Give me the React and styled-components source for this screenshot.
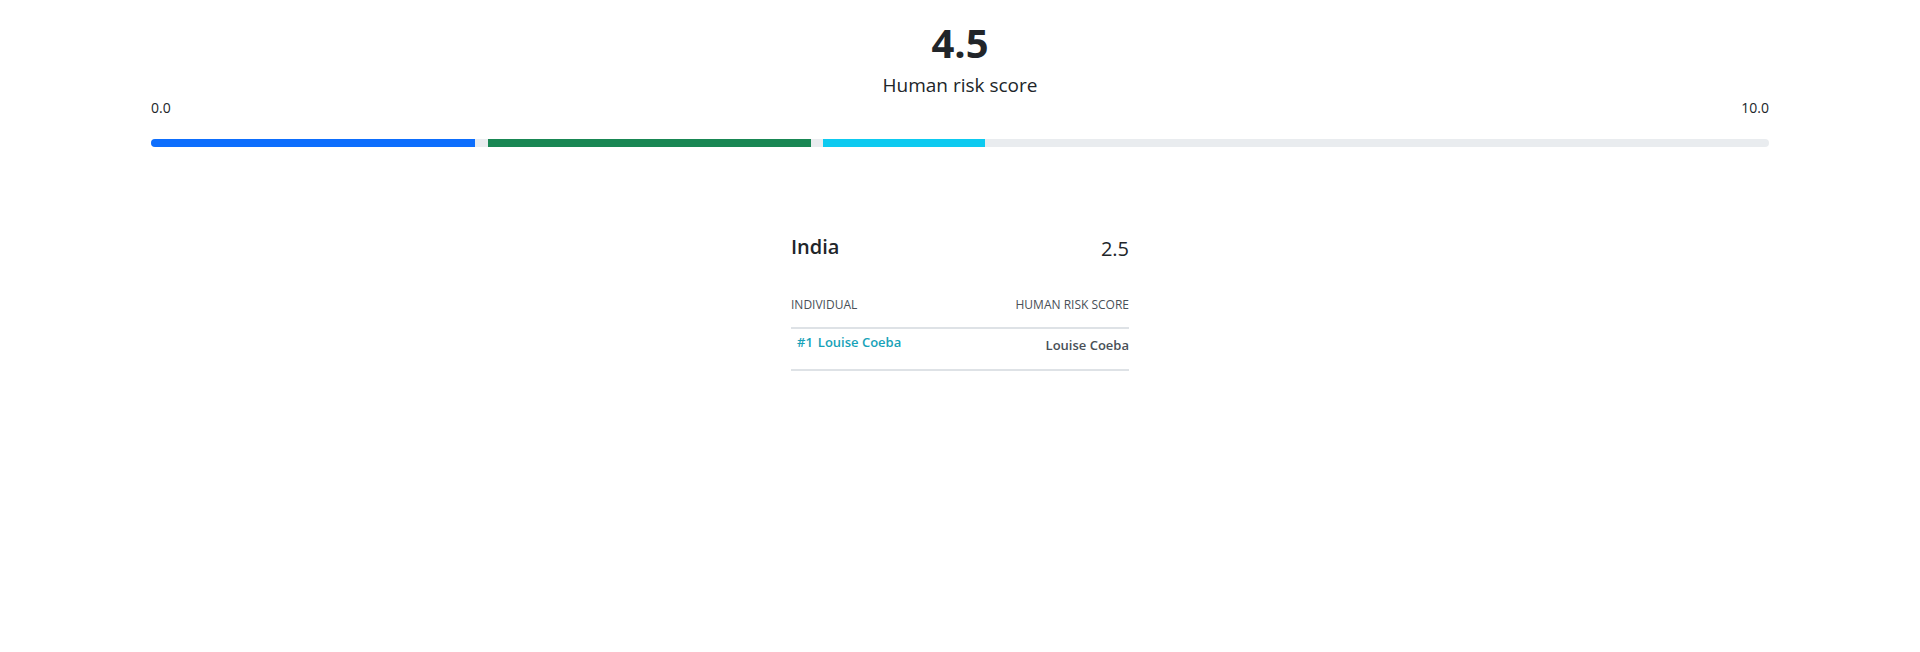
import styled, { createGlobalStyle } from 'styled-components';

const GlobalStyle = createGlobalStyle`
  body {
    margin: 0;
    background: #fff;
    color: #212529;
    font-family: "Open Sans", "Noto Sans", sans-serif;
  }
`;

const segments = [
  { id: 'low', color: '#0d6efd', width: 20, gap: 13 },
  { id: 'mid', color: '#198754', width: 20, gap: 12 },
  { id: 'high', color: '#0dcaf0', width: 10, gap: 0 },
];

const rows = [
  { rank: 1, name: 'Louise Coeba', score: 'Louise Coeba' },
];

function App() {
  return (
    <>
      <GlobalStyle />
      <Page>
        <Summary>
          <Score>4.5</Score>
          <Caption>Human risk score</Caption>
        </Summary>

        <ScaleLabels>
          <span>0.0</span>
          <span>10.0</span>
        </ScaleLabels>
        <Progress>
          {segments.map((s) => (
            <Segment key={s.id} $color={s.color} $gap={s.gap} style={{ width: `${s.width}%` }} />
          ))}
        </Progress>

        <Card>
          <CardHead>
            <Country>India</Country>
            <CountryScore>2.5</CountryScore>
          </CardHead>
          <Table>
            <thead>
              <tr>
                <Th>Individual</Th>
                <Th $right>Human risk score</Th>
              </tr>
            </thead>
            <tbody>
              {rows.map((r) => (
                <tr key={r.rank}>
                  <Td>
                    <PersonLink href="#">
                      <Rank>#{r.rank}</Rank>
                      {r.name}
                    </PersonLink>
                  </Td>
                  <Td $right>{r.score}</Td>
                </tr>
              ))}
            </tbody>
          </Table>
        </Card>
      </Page>
    </>
  );
}

export default App;

const Page = styled.div`
  padding: 19px 151px 0 151px;
`;

const Summary = styled.div`
  text-align: center;
`;

const Score = styled.h1`
  margin: 0;
  font-size: 40px;
  font-weight: 700;
  line-height: 1.2;
  color: #212529;
`;

const Caption = styled.p`
  margin: 3px 0 0;
  font-size: 19px;
  line-height: 30px;
  font-weight: 400;
  color: #212529;
`;

const ScaleLabels = styled.div`
  display: flex;
  justify-content: space-between;
  font-size: 14px;
  line-height: 1.2;
  color: #212529;
`;

const Progress = styled.div`
  display: flex;
  height: 8px;
  margin-top: 22px;
  background: #e9ecef;
  border-radius: 4px;
  overflow: hidden;
`;

const Segment = styled.div`
  height: 100%;
  background: ${(p) => p.$color};
  margin-right: ${(p) => p.$gap}px;
`;

const Card = styled.div`
  width: 338px;
  margin: 88px auto 0;
`;

const CardHead = styled.div`
  display: flex;
  justify-content: space-between;
  align-items: flex-start;
`;

const Country = styled.h5`
  margin: 0;
  font-size: 20px;
  font-weight: 600;
  line-height: 1.2;
  color: #212529;
`;

const CountryScore = styled.span`
  margin-top: 2px;
  font-size: 20px;
  line-height: 1.2;
  font-weight: 400;
  color: #212529;
`;

const Table = styled.table`
  width: 100%;
  margin-top: 35px;
  border-collapse: collapse;
`;

const Th = styled.th`
  padding: 0 0 13px;
  font-size: 12px;
  line-height: 1.5;
  font-weight: 400;
  text-transform: uppercase;
  text-align: ${(p) => (p.$right ? 'right' : 'left')};
  color: #495057;
  border-bottom: 2px solid #dee2e6;
`;

const Td = styled.td`
  padding: ${(p) => (p.$right ? '7px 0 14px' : '4px 0 17px')};
  font-size: 13px;
  line-height: 1.5;
  font-weight: 600;
  vertical-align: top;
  text-align: ${(p) => (p.$right ? 'right' : 'left')};
  color: #495057;
  border-bottom: 2px solid #dee2e6;
`;

const PersonLink = styled.a`
  padding-left: 6px;
  color: #17a2b8;
  text-decoration: none;
`;

const Rank = styled.span`
  margin-right: 5px;
`;
